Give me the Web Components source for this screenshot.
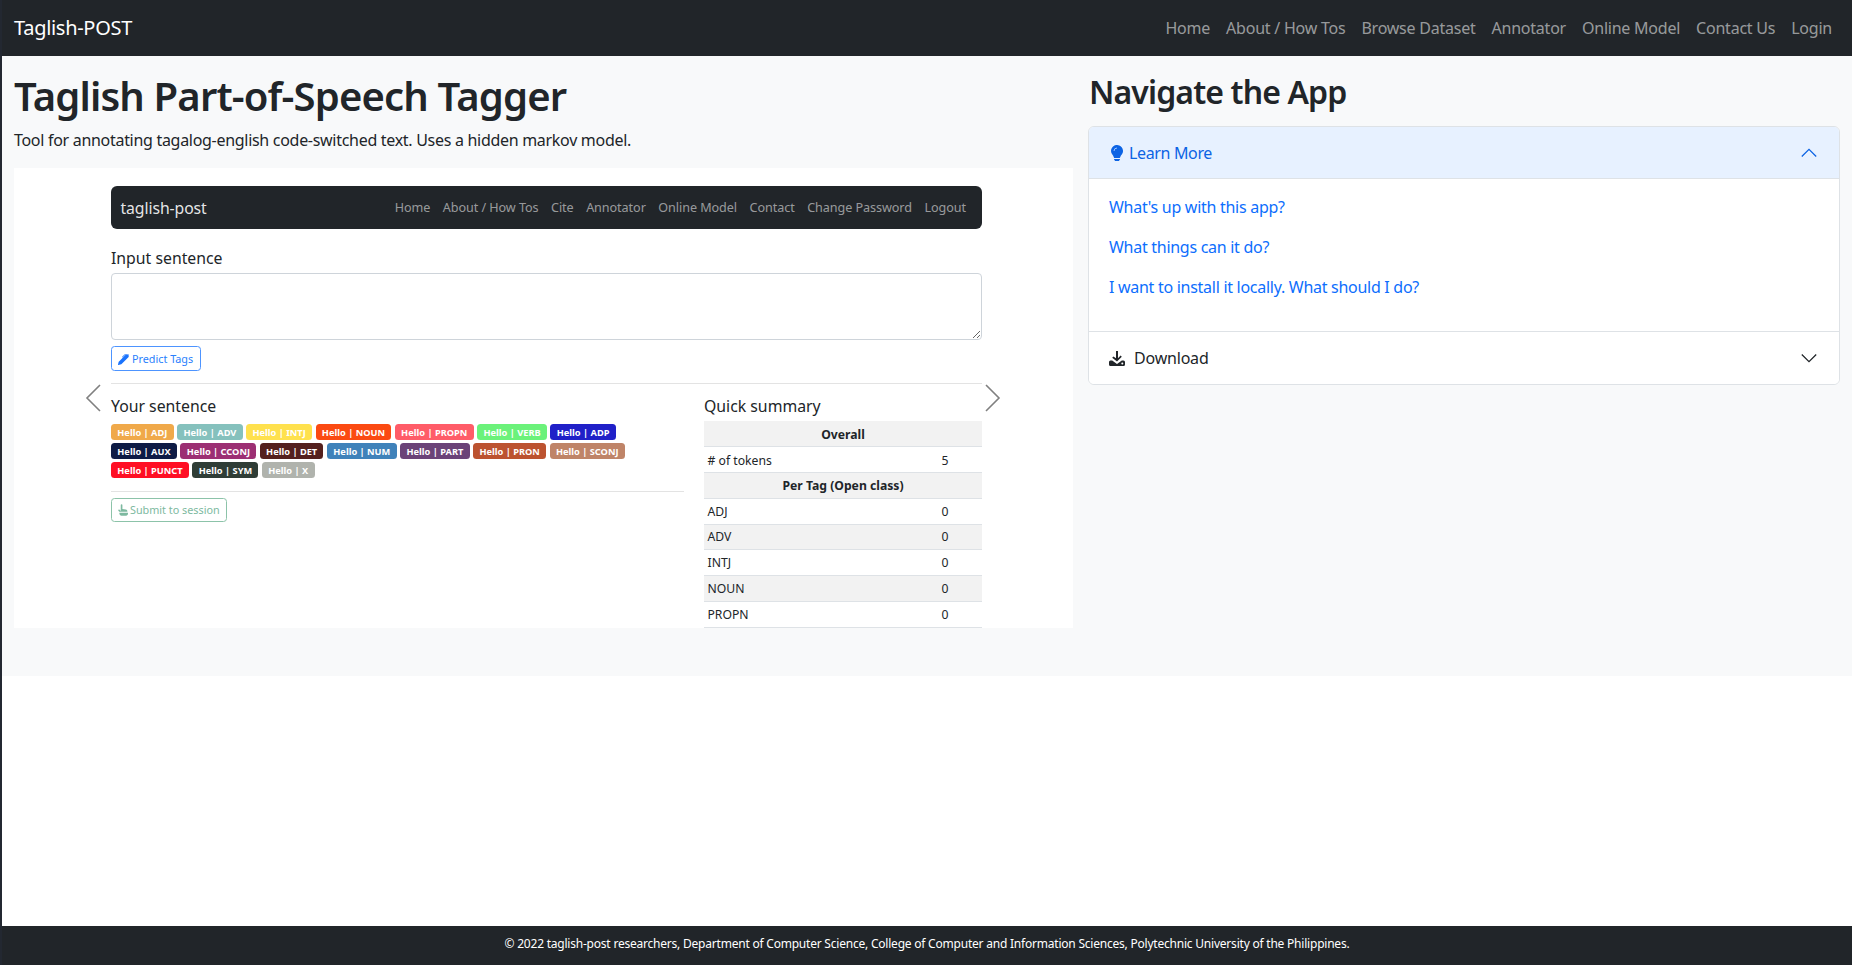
<!doctype html>
<html lang="en"><head><meta charset="utf-8"><title>Taglish-POST</title>
<style>
html,body{margin:0;padding:0;height:965px;overflow:hidden;background:#fff}
body{font-family:"Noto Sans","Liberation Sans",sans-serif;color:#212529;font-size:16px;line-height:1.5;border-left:2px solid #232831;box-sizing:border-box}
</style></head><body>
<tp-app></tp-app>
<script>
function def(name,html,init){
  customElements.define(name,class extends HTMLElement{
    constructor(){super();this.attachShadow({mode:'open'}).innerHTML=html;if(init)init(this);}
  });
}
def('tp-navlink',`<style>:host{display:block;color:rgba(255,255,255,.55);font-size:16px;letter-spacing:-.23px;white-space:nowrap}</style><slot></slot>`);
def('tp-topbar',`<style>
:host{display:flex;align-items:center;justify-content:space-between;height:56px;background:#212529;padding:0 20px 0 12px;flex:none}
.b{color:#fff;font-size:20px;letter-spacing:-.3px}
nav{display:flex;gap:16px}
</style><div class="b">Taglish-POST</div><nav><slot></slot></nav>`);
def('tp-shotlink',`<style>:host{display:block;color:rgba(255,255,255,.55);font-size:12.6px;white-space:nowrap;letter-spacing:-.06px}</style><slot></slot>`);
def('tp-shotbar',`<style>
:host{display:flex;align-items:center;justify-content:space-between;height:43px;box-sizing:border-box;background:#212529;border-radius:6px;padding:2px 16px 0 9.5px;flex:none}
.b{color:rgba(255,255,255,.9);font-size:15.8px;letter-spacing:-.1px}
nav{display:flex;gap:12.5px}
</style><div class="b">taglish-post</div><nav><slot></slot></nav>`);
def('tp-badge',`<style>
:host{display:block;height:16px;line-height:17px;padding:0 6.3px;border-radius:3.5px;color:#fff;font-size:9.25px;font-weight:700;white-space:nowrap;background:var(--c,#888)}
</style><slot></slot>`,el=>{});
def('tp-btn',`<style>
:host{display:inline-flex;align-items:center;box-sizing:border-box;border:1px solid var(--b);color:var(--t);background:#fff;border-radius:3.5px;font-size:10.8px;white-space:nowrap;padding:var(--pt,0) 6px 0;height:var(--h);gap:var(--g)}
</style><slot></slot>`);
def('tp-summary',`<style>
:host{display:block;font-size:12.2px;color:#212529}
h3{margin:0 0 5px;font-size:15.8px;font-weight:400;line-height:20px}
table{border-collapse:collapse;width:278px;table-layout:fixed}
td,th{height:25.75px;padding:1px 3.5px 0;box-sizing:border-box;border-bottom:1px solid #dee2e6;line-height:16px;overflow:hidden}
tr.d>*{padding-top:2px}
th{font-weight:700;text-align:center}
.g{background:#f2f2f2}
.n{width:44px}
</style>
<h3>Quick summary</h3>
<table>
<colgroup><col><col class="n"></colgroup>
<tr class="g d"><th colspan="2">Overall</th></tr>
<tr class="d"><td># of tokens</td><td>5</td></tr>
<tr class="g"><th colspan="2">Per Tag (Open class)</th></tr>
<tr><td>ADJ</td><td>0</td></tr>
<tr class="g"><td>ADV</td><td>0</td></tr>
<tr><td>INTJ</td><td>0</td></tr>
<tr class="g"><td>NOUN</td><td>0</td></tr>
<tr><td>PROPN</td><td>0</td></tr>
</table>`);
const B=[['ADJ','#f0a94a'],['ADV','#85c1bd'],['INTJ','#ffe14d'],['NOUN','#fb4a12'],['PROPN','#ff5c68'],['VERB','#6bf27a'],['ADP','#2020c8'],['AUX','#0e1b45'],['CCONJ','#9c2f73'],['DET','#54201e'],['NUM','#3f82ba'],['PART','#6b4378'],['PRON','#bc5330'],['SCONJ','#bf8468'],['PUNCT','#ff0f24'],['SYM','#2f3d36'],['X','#b0b3ad']];
def('tp-shot',`<style>
:host{display:block;position:relative;background:#fff;height:460px;overflow:hidden;box-sizing:border-box;padding:18px 91px 0 97px;color:#212529}
label{display:block;font-size:15.8px;line-height:20px;margin-top:19px;margin-bottom:5px}
textarea{display:block;width:100%;height:67px;box-sizing:border-box;border:1px solid #ced4da;border-radius:4px;margin:0 0 6px;background:#fff;outline:none}
.p{--b:#4d94ff;--t:#2a7ffd;--h:25px;--g:3px;--pt:1px;width:90px}
hr{border:0;border-top:1px solid #e3e3e3;margin:0}
.top{margin-top:12px}
.cols{display:grid;grid-template-columns:573px 278px;column-gap:20px}
.cols>div:first-child,tp-summary{padding-top:12px}
h3{margin:0 0 8px;font-size:15.8px;font-weight:400;line-height:20px}
.bs{display:flex;flex-wrap:wrap;gap:3px 3.5px}
.l hr{margin:13px 0 6px}
.s{--b:#8cc3a9;--t:#7db9a0;--h:24px;--g:1px;width:116px}
svg.a{position:absolute;top:216px;width:16px;height:28px;fill:none;stroke:#808080;stroke-width:1.6}
svg.i{flex:none}
</style>
<tp-shotbar><tp-shotlink>Home</tp-shotlink><tp-shotlink>About / How Tos</tp-shotlink><tp-shotlink>Cite</tp-shotlink><tp-shotlink>Annotator</tp-shotlink><tp-shotlink>Online Model</tp-shotlink><tp-shotlink>Contact</tp-shotlink><tp-shotlink>Change Password</tp-shotlink><tp-shotlink>Logout</tp-shotlink></tp-shotbar>
<label>Input sentence</label>
<textarea></textarea>
<tp-btn class="p"><svg class="i" width="11" height="11" viewBox="0 0 16 16" fill="#1a73fd"><path d="m13.498.795.149-.149a1.207 1.207 0 1 1 1.707 1.708l-.149.148a1.5 1.5 0 0 1-.059 2.059L4.854 14.854a.5.5 0 0 1-.233.131l-4 1a.5.5 0 0 1-.606-.606l1-4a.5.5 0 0 1 .131-.232l9.642-9.642a.5.5 0 0 0-.642.056L6.854 4.854a.5.5 0 1 1-.708-.708L9.44.854A1.5 1.5 0 0 1 11.5.796a1.5 1.5 0 0 1 1.998-.001z"/></svg>Predict Tags</tp-btn>
<hr class="top">
<div class="cols">
<div class="l"><h3>Your sentence</h3><div class="bs" id="bs"></div><hr><tp-btn class="s"><svg class="i" width="11" height="12" viewBox="0 0 16 17" fill="#7db9a0"><path d="M4 1.200a1.200 1.200 0 0 1 2.400 0V7l5 .8c1.300.2 2.200 1.100 2.200 2.400v.8H1.800L.4 9.200c-.5-.9.9-2 1.800-1.100L4 9.800z"/><path d="M2 12.500h12.500V14c0 1.500-1.200 2.700-2.700 2.700H5c-1.700 0-3-1.300-3-3z"/></svg>Submit to session</tp-btn></div>
<tp-summary></tp-summary>
</div>
<svg class="a" style="left:71px" viewBox="0 0 16 28"><path d="M15 1 2 14l13 13"/></svg>
<svg class="a" style="left:971px" viewBox="0 0 16 28"><path d="m1 1 13 13L1 27"/></svg>`,el=>{
  const h=el.shadowRoot.getElementById('bs');
  B.forEach(([t,c])=>{const b=document.createElement('tp-badge');b.textContent='Hello | '+t;b.style.setProperty('--c',c);h.appendChild(b);});
});
def('tp-acc-head',`<style>
:host{display:flex;align-items:center;height:52px;box-sizing:border-box;padding:0 22px 0 20px;color:var(--t,#212529);background:var(--bg,#fff);border-bottom:var(--bb,0);letter-spacing:var(--ls,-.2px)}
.t{flex:1;display:flex;align-items:center;gap:var(--g,8px)}
</style><div class="t"><slot name="icon"></slot><slot></slot></div><slot name="chev"></slot>`);
def('tp-accordion',`<style>
:host{display:block;background:#fff;border:1px solid #dee2e6;border-radius:6px;overflow:hidden}
.b{padding:16px 20px;border-bottom:1px solid #dee2e6;height:153px;box-sizing:border-box;color:#0d6efd;letter-spacing:-.28px}
.b div{height:24px;margin-bottom:16px;white-space:nowrap}
.h1{--t:#0c63e4;--bg:#e7f1ff;--bb:1px solid #dee2e6;--g:4px;--ls:-.35px}
.h2{--g:9px}
svg{display:block;flex:none}
</style>
<tp-acc-head class="h1"><svg slot="icon" width="16" height="16" viewBox="0 0 16 16" fill="#0c63e4"><path d="M2 6a6 6 0 1 1 10.174 4.31c-.203.196-.359.4-.453.619l-.762 1.769A.5.5 0 0 1 10.5 13h-5a.5.5 0 0 1-.46-.302l-.761-1.77a1.964 1.964 0 0 0-.453-.618A5.984 5.984 0 0 1 2 6zm3 8.500a.5.5 0 0 1 .5-.5h5a.5.5 0 0 1 0 1l-.224.447a1 1 0 0 1-.894.553H6.618a1 1 0 0 1-.894-.553L5.500 15a.5.5 0 0 1-.5-.5z"/><path d="M5 6a3 3 0 0 1 3-3" fill="none" stroke="#9cc3ff" stroke-width="1"/></svg>Learn More<svg slot="chev" width="16" height="16" viewBox="0 0 16 16" fill="none" stroke="#0c63e4" stroke-width="1.3"><path d="m.8 11.500 7.200-7.200 7.200 7.200"/></svg></tp-acc-head>
<div class="b"><div>What's up with this app?</div><div>What things can it do?</div><div>I want to install it locally. What should I do?</div></div>
<tp-acc-head class="h2"><svg slot="icon" width="16" height="16" viewBox="0 0 16 16" fill="#212529"><path d="M7 1h2v7.200l2.600-2.600 1.200 1.200L8 11.600 3.200 7.800l1.200-1.200L7 8.200z"/><path d="M1.500 10.500h1.700L8 14l4.800-3.500h1.700A1.500 1.500 0 0 1 16 12v2.500a1.500 1.500 0 0 1-1.500 1.500h-13A1.500 1.500 0 0 1 0 14.500V12a1.500 1.500 0 0 1 1.500-1.500z"/><circle cx="13.300" cy="13.500" r="1" fill="#fff"/></svg>Download<svg slot="chev" width="16" height="16" viewBox="0 0 16 16" fill="none" stroke="#212529" stroke-width="1.3"><path d="m.8 4.500 7.200 7.200 7.200-7.200"/></svg></tp-acc-head>`);
def('tp-hero',`<style>
:host{display:grid;grid-template-columns:1059px 1fr;column-gap:15px;height:620px;background:#f8f9fa;padding:17px 12px 0 12px;box-sizing:border-box;flex:none}
h1{margin:-1px 0 0;font-size:40px;font-weight:600;line-height:48px;letter-spacing:-.84px;white-space:nowrap}
p{margin:8px 0 16px;height:24px;letter-spacing:-.295px;white-space:nowrap}
h2{margin:0 0 15px;font-size:32px;font-weight:600;line-height:38px;height:38px;letter-spacing:-.88px;padding-left:1px}
</style>
<div><h1>Taglish Part-of-Speech Tagger</h1><p>Tool for annotating tagalog-english code-switched text. Uses a hidden markov model.</p><tp-shot></tp-shot></div>
<div><h2>Navigate the App</h2><tp-accordion></tp-accordion></div>`);
def('tp-footer',`<style>
:host{display:flex;align-items:center;justify-content:center;height:39px;box-sizing:border-box;padding-bottom:4px;background:#212529;color:#fff;font-size:12px;letter-spacing:-.216px;white-space:nowrap;flex:none}
</style><slot></slot>`);
def('tp-app',`<style>
:host{display:flex;flex-direction:column;height:965px}
.sp{flex:1;background:#fff}
</style>
<tp-topbar><tp-navlink>Home</tp-navlink><tp-navlink>About / How Tos</tp-navlink><tp-navlink>Browse Dataset</tp-navlink><tp-navlink>Annotator</tp-navlink><tp-navlink>Online Model</tp-navlink><tp-navlink>Contact Us</tp-navlink><tp-navlink>Login</tp-navlink></tp-topbar>
<tp-hero></tp-hero>
<div class="sp"></div>
<tp-footer>© 2022 taglish-post researchers, Department of Computer Science, College of Computer and Information Sciences, Polytechnic University of the Philippines.</tp-footer>`);
</script>
</body></html>
